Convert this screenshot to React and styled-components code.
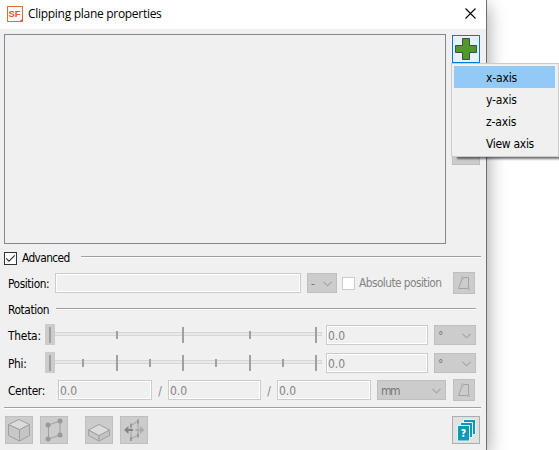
import React from 'react';
import styled, { createGlobalStyle, css } from 'styled-components';

const GlobalStyle = createGlobalStyle`
  * { box-sizing: border-box; }
  body { margin: 0; background: #fff; overflow: hidden; }
  body, input, button { font-family: "DejaVu Sans Condensed", "DejaVu Sans", sans-serif; font-stretch: condensed; font-size: 12px; }
`;

const Desktop = styled.div`
  position: relative;
  width: 559px;
  height: 450px;
  overflow: hidden;
  background: #fff;
`;
const Dialog = styled.main`
  width: 487px;
  height: 450px;
  display: flex;
  flex-direction: column;
  background: #f0f0f0;
  border-right: 1px solid #6e6e6e;
  box-shadow: 0 6px 18px rgba(0, 0, 0, 0.4);
`;
const TitleBar = styled.header`
  height: 29px;
  flex: none;
  display: flex;
  align-items: center;
  padding: 0 10px 2px 7px;
  background: #fff;
  color: #000;
`;
const Title = styled.h1`
  margin: 0 auto 0 5px;
  padding-top: 1px;
  font: 400 12px/16px "Open Sans", sans-serif;
  letter-spacing: -0.29px;
`;
const ListRow = styled.section`
  display: flex;
  gap: 6px;
  height: 215px;
  padding: 5px 6px 0 4px;
`;
const ListBox = styled.div`
  width: 442px;
  height: 210px;
  border: 1px solid #828790;
`;
const SideButtons = styled.div`
  display: flex;
  flex-direction: column;
  justify-content: space-between;
  height: 131px;
  padding-top: 1px;
`;
const IconButton = styled.button`
  width: ${p => p.$size || 28}px;
  height: ${p => p.$size || 28}px;
  flex: none;
  padding: 0;
  margin: 0 0 0 ${p => p.$gap || 0}px;
  display: flex;
  align-items: center;
  justify-content: center;
  border: 1px solid #bfbfbf;
  background: #cccccc;
  ${p => p.$tone === 'hot' && css`border-color: #0078d7; background: #e5f1fb;`}
  ${p => p.$tone === 'normal' && css`border-color: #adadad; background: #e1e1e1;`}
`;
const Row = styled.div`
  display: flex;
  align-items: center;
  height: ${p => p.$h}px;
  margin-top: ${p => p.$top || 0}px;
  padding-left: ${p => p.$left ?? 8}px;
`;
const Text = styled.span`
  flex: none;
  width: ${p => (p.$w ? `${p.$w}px` : 'auto')};
  margin-left: ${p => p.$gap || 0}px;
  padding-top: ${p => p.$drop || 0}px;
  font-size: 11.8px;
  line-height: 16px;
  white-space: nowrap;
  letter-spacing: ${p => p.$spacing || 0}px;
  color: ${p => (p.$muted ? '#838383' : '#000')};
  text-align: ${p => p.$align || 'left'};
`;
const Rule = styled.div`
  width: ${p => p.$w}px;
  height: 2px;
  flex: none;
  margin-bottom: ${p => p.$lift || 0}px;
  background: linear-gradient(#a0a0a0 50%, #fff 50%);
`;
const Field = styled.input`
  width: ${p => p.$w}px;
  height: 20px;
  flex: none;
  margin: 0 0 0 ${p => p.$gap || 0}px;
  padding: 2px 1px 0;
  border: 1px solid #cccccc;
  border-radius: 0;
  outline: none;
  box-shadow: inset 0 0 0 1px #fff;
  background: #f0f0f0;
  color: #838383;
`;
const Combo = styled.div`
  width: ${p => p.$w}px;
  height: 20px;
  flex: none;
  display: flex;
  align-items: center;
  justify-content: space-between;
  margin-left: ${p => p.$gap}px;
  padding: 2px 4px 0 3px;
  border: 1px solid #bfbfbf;
  background: #cccccc;
  color: #777;
  letter-spacing: ${p => p.$spacing || 0}px;
`;
const CheckBox = styled.span`
  width: 13px;
  height: 13px;
  flex: none;
  display: flex;
  margin-left: ${p => p.$gap || 0}px;
  border: 1px solid ${p => (p.$muted ? '#cccccc' : '#333')};
  background: #fff;
`;
const SliderBox = styled.div`
  position: relative;
  width: 277px;
  height: 21px;
  flex: none;
  display: flex;
  align-items: center;
`;
const Thumb = styled.div`
  width: 10px;
  height: 21px;
  background: #cccccc;
`;
const Groove = styled.div`
  width: 267px;
  height: 4px;
  margin-bottom: 1px;
  border: 1px solid #d6d6d6;
  border-left: 0;
  background: #e7eaea;
`;
const Ticks = styled.div`
  position: absolute;
  left: 4px;
  top: 3px;
  width: 268px;
  height: 16px;
  display: flex;
  align-items: center;
  justify-content: space-between;
`;
const Tick = styled.i`
  width: 2px;
  height: ${p => (p.$major ? 16 : 8)}px;
  background: #a0a0a0;
`;
const Menu = styled.ul`
  position: absolute;
  left: 451px;
  top: 63px;
  width: 108px;
  height: 94px;
  margin: 0;
  padding: 2px;
  list-style: none;
  border: 1px solid #cccccc;
  background: #f0f0f0;
  box-shadow: 4px 4px 2px -2px rgba(0, 0, 0, 0.55);
`;
const MenuItem = styled.li`
  width: 101px;
  height: 22px;
  padding: 2px 0 0 32px;
  line-height: 20px;
  letter-spacing: ${p => p.$spacing}px;
  white-space: nowrap;
  background: ${p => (p.$active ? '#91c9f7' : 'transparent')};
`;

const Chevron = () => (
  <svg width="9" height="6" viewBox="0 0 9 6" fill="none" stroke="#a3a3a3" strokeWidth="1.1">
    <path d="M.5 .8 4.5 4.8 8.5 .8" />
  </svg>
);
const AppLogo = () => (
  <svg width="16" height="16" viewBox="0 0 16 16">
    <rect x=".5" y=".5" width="15" height="15" fill="#fff" stroke="#e56a3c" />
    <path d="M12.5 15.5 15.5 12.5V15.5Z" fill="#e8501c" />
    <text x="1.6" y="11.4" fontFamily="Liberation Sans" fontWeight="700" fontSize="9.3" textLength="12" lengthAdjust="spacingAndGlyphs" fill="#e8501c">SF</text>
  </svg>
);
const CloseIcon = () => (
  <svg width="11" height="11" viewBox="0 0 11 11" fill="none" stroke="#000" strokeWidth="1.1">
    <path d="M.5 .5 10.5 10.5M10.5 .5 .5 10.5" />
  </svg>
);
const PlusIcon = () => (
  <svg width="22" height="22" viewBox="0 0 22 22">
    <path d="M7.5 .5H14.5V7.5H21.5V14.5H14.5V21.5H7.5V14.5H.5V7.5H7.5Z" fill="#4f9a2b" stroke="#444b40" strokeLinejoin="round" />
  </svg>
);
const PlaneIcon = () => (
  <svg width="20" height="20" viewBox="0 0 20 20" fill="none" stroke="#a3a3a3">
    <path d="M8.5 4.5H14.5V15.5H4.5Z" />
    <path d="M7 3.5H10V6.5H7ZM13 14H16V17H13Z" fill="#b7b7b7" stroke="none" />
  </svg>
);
const CubeIcon = () => (
  <svg width="26" height="26" viewBox="0 0 26 26" stroke="#a0a0a0" strokeLinejoin="round">
    <path d="M2.5 7.5 13.5 12.5V24L2.5 18.5Z" fill="#c8c8c8" />
    <path d="M13.5 12.5 23.5 7.5V18.5L13.5 24Z" fill="#c4c4c4" />
    <path d="M2.5 7.5 13 2.5 23.5 7.5 13.5 12.5Z" fill="#dcdcdc" />
  </svg>
);
const NodesIcon = () => (
  <svg width="26" height="26" viewBox="0 0 26 26" fill="none" stroke="#a0a0a0">
    <path d="M7.5 8 19 4V18L7.5 22Z" />
    <g fill="#999" stroke="none">
      <circle cx="7" cy="8" r="2.5" /><circle cx="19" cy="4" r="2.5" />
      <circle cx="19" cy="18" r="2.5" /><circle cx="7" cy="22" r="2.5" />
    </g>
  </svg>
);
const SlabIcon = () => (
  <svg width="26" height="26" viewBox="0 0 26 26" stroke="#a0a0a0" strokeLinejoin="round">
    <path d="M2.5 13 13 18.5V24L2.5 18.5Z" fill="#c8c8c8" />
    <path d="M13 18.5 23.5 13V18.5L13 24Z" fill="#c4c4c4" />
    <path d="M2.5 13 13 7.5 23.5 13 13 18.5Z" fill="#dcdcdc" />
  </svg>
);
const FlipIcon = () => (
  <svg width="26" height="26" viewBox="0 0 26 26" fill="none" stroke="#a0a0a0">
    <path d="M10 8.5 17 4V18L10 22Z" />
    <path d="M9 6.5h2v4H9ZM16 2.5h2v4h-2ZM16 16.5h2v4h-2ZM9 20h2v4H9Z" fill="#999" stroke="none" />
    <path d="M3 13 7.5 9V12H12V14H7.5V17Z" fill="#858585" stroke="none" />
    <path d="M23.5 13 19 9V12H14.5V14H19V17Z" fill="#adadad" stroke="none" />
  </svg>
);
const HelpIcon = () => (
  <svg width="26" height="26" viewBox="0 0 26 26">
    <g fill="#0b99b8" stroke="#e4f5f8">
      <path d="M10.5 2.5H22.5V17.5H10.5Z" />
      <path d="M7.5 5.5H19.5V20.5H7.5Z" />
      <path d="M4.5 8.5H16.5V24H4.5Z" />
    </g>
    <text x="10.5" y="20.2" textAnchor="middle" fontFamily="Open Sans" fontWeight="800" fontSize="11" fill="#fff">?</text>
  </svg>
);

const Slider = ({ count }) => (
  <SliderBox>
    <Thumb />
    <Groove />
    <Ticks>
      {Array.from({ length: count }, (_, i) => <Tick key={i} $major={i % 2 === 0} />)}
    </Ticks>
  </SliderBox>
);
const AngleRow = ({ label, top, ticks, spacing }) => (
  <Row $h={21} $top={top}>
    <Text $w={37} $drop={2} $spacing={spacing}>{label}</Text>
    <Slider count={ticks} />
    <Field $gap={4} $w={102} defaultValue="0.0" />
    <Combo $gap={6} $w={42}>°<Chevron /></Combo>
  </Row>
);

export default function App() {
  return (
    <Desktop>
      <GlobalStyle />
      <Dialog>
        <TitleBar>
          <AppLogo />
          <Title>Clipping plane properties</Title>
          <CloseIcon />
        </TitleBar>
        <ListRow>
          <ListBox />
          <SideButtons>
            <IconButton $tone="hot"><PlusIcon /></IconButton>
            <IconButton />
          </SideButtons>
        </ListRow>
        <Row $h={16} $top={6} $left={4}>
          <CheckBox>
            <svg width="11" height="11" viewBox="0 0 11 11" fill="none" stroke="#333" strokeWidth="1.2"><path d="M1.2 5.3 4 8.2 9.8 2.3" /></svg>
          </CheckBox>
          <Text $gap={5} $w={59} $spacing={-0.6}>Advanced</Text>
          <Rule $w={400} $lift={2} />
        </Row>
        <Row $h={22} $top={6}>
          <Text $w={47} $drop={2} $spacing={-0.4}>Position:</Text>
          <Field $w={246} />
          <Combo $gap={6} $w={30}>-<Chevron /></Combo>
          <CheckBox $muted $gap={5} />
          <Text $muted $gap={4} $w={94} $spacing={-0.55}>Absolute position</Text>
          <IconButton $size={22}><PlaneIcon /></IconButton>
        </Row>
        <Row $h={16} $top={8}>
          <Text $w={48} $spacing={-0.4}>Rotation</Text>
          <Rule $w={420} $lift={2} />
        </Row>
        <AngleRow label="Theta:" top={6} ticks={5} spacing={-0.2} />
        <AngleRow label="Phi:" top={7} ticks={9} spacing={-0.3} />
        <Row $h={22} $top={6}>
          <Text $w={50} $drop={2} $spacing={-0.3}>Center:</Text>
          <Field $w={94} defaultValue="0.0" />
          <Text $muted $w={16} $drop={1} $align="center">/</Text>
          <Field $w={93} defaultValue="0.0" />
          <Text $muted $w={16} $drop={1} $align="center">/</Text>
          <Field $w={94} defaultValue="0.0" />
          <Combo $gap={6} $w={69} $spacing={-1.5}>mm<Chevron /></Combo>
          <IconButton $gap={7} $size={22}><PlaneIcon /></IconButton>
        </Row>
        <Row $h={2} $top={6} $left={4}><Rule $w={477} /></Row>
        <Row $h={28} $top={7} $left={5}>
          <IconButton><CubeIcon /></IconButton>
          <IconButton $gap={7}><NodesIcon /></IconButton>
          <IconButton $gap={17}><SlabIcon /></IconButton>
          <IconButton $gap={7}><FlipIcon /></IconButton>
          <IconButton $gap={304} $tone="normal"><HelpIcon /></IconButton>
        </Row>
      </Dialog>
      <Menu>
        <MenuItem $active $spacing={-0.15}>x-axis</MenuItem>
        <MenuItem $spacing={-0.15}>y-axis</MenuItem>
        <MenuItem $spacing={-0.15}>z-axis</MenuItem>
        <MenuItem $spacing={-0.3}>View axis</MenuItem>
      </Menu>
    </Desktop>
  );
}
